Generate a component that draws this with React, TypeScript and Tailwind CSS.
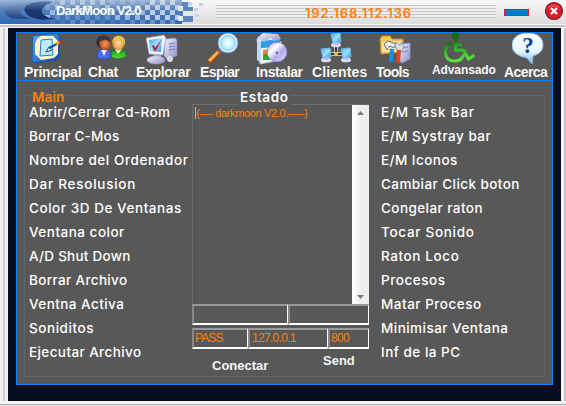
import type { ReactNode } from "react";

const leftItems = [
  ["Abrir/Cerrar Cd-Rom", "tracking-[0.36px]"], ["Borrar C-Mos", "tracking-[0.2px]"], ["Nombre del Ordenador", "tracking-[0.6px]"],
  ["Dar Resolusion", "tracking-[0.75px]"], ["Color 3D De Ventanas", "tracking-[0.55px]"], ["Ventana color", "tracking-[0.5px]"],
  ["A/D Shut Down", "tracking-[0.25px]"], ["Borrar Archivo", "tracking-[0.35px]"], ["Ventna Activa", "tracking-[0.45px]"],
  ["Soniditos", "tracking-[0.55px]"], ["Ejecutar Archivo", "tracking-[0.4px]"],
];
const rightItems = [
  ["E/M Task Bar", "tracking-[0.75px]"], ["E/M Systray bar", "tracking-[0.5px]"], ["E/M Iconos", "tracking-[0.45px]"],
  ["Cambiar Click boton", "tracking-[0.43px]"], ["Congelar raton", "tracking-[0.43px]"], ["Tocar Sonido", "tracking-[0.7px]"],
  ["Raton Loco", "tracking-[0.6px]"], ["Procesos", "tracking-[0.55px]"], ["Matar Proceso", "tracking-[0.5px]"],
  ["Minimisar Ventana", "tracking-[0.47px]"], ["Inf de la PC", "tracking-[0.5px]"],
];

function Icon({ children, className = "" }: { children: ReactNode; className?: string }) {
  return <svg width="32" height="32" viewBox="0 0 32 32" className={`block shrink-0 ${className}`}>{children}</svg>;
}

function Gradients() {
  return (
    <svg width="0" height="0" className="absolute">
      <defs>
        <linearGradient id="blue" x2="1" y2="1"><stop stopColor="#58b4f8" /><stop offset="1" stopColor="#0c3fae" /></linearGradient>
        <linearGradient id="screen" x2="1" y2="1"><stop stopColor="#38a5f4" /><stop offset=".5" stopColor="#9be2fc" /><stop offset="1" stopColor="#2790e8" /></linearGradient>
        <linearGradient id="case" x2="1" y2="1"><stop stopColor="#f5f5ff" /><stop offset="1" stopColor="#8d8fc6" /></linearGradient>
        <linearGradient id="green" y2="1" x2="0"><stop stopColor="#176b10" /><stop offset=".4" stopColor="#23b51c" /><stop offset="1" stopColor="#65df43" /></linearGradient>
        <radialGradient id="lens"><stop stopColor="#fff" /><stop offset=".6" stopColor="#c0f1fd" /><stop offset="1" stopColor="#69bceb" /></radialGradient>
        <radialGradient id="skin1"><stop stopColor="#f59a58" /><stop offset="1" stopColor="#b8481c" /></radialGradient>
        <radialGradient id="skin2"><stop stopColor="#ffe1a0" /><stop offset="1" stopColor="#e0983c" /></radialGradient>
        <linearGradient id="disc" x2="1" y2="1"><stop stopColor="#a8a3e5" /><stop offset=".35" stopColor="#fff" /><stop offset=".6" stopColor="#aca6e8" /><stop offset="1" stopColor="#f1e9ff" /></linearGradient>
        <linearGradient id="bubble" x2="0" y2="1"><stop stopColor="#fff" /><stop offset=".6" stopColor="#e9f5ff" /><stop offset="1" stopColor="#70b6ef" /></linearGradient>
      </defs>
    </svg>
  );
}

function PrincipalIcon() {
  return <Icon className="ml-2">
    <path d="M1 3 25 0l3 3-1 22-3 2-22 3-2-2Z" fill="url(#blue)" stroke="#0c479f" strokeWidth=".6" />
    <path d="m5 6 4-3h12l5 5v13l-4 4-13 2-6-6V11Z" fill="#fff6c7" />
    <path d="m9 7 11-1 1 16-13 1Z" fill="#bceaff" stroke="#1684d2" />
    <path d="m14 19 3-5 3 3Z" fill="#fff" stroke="#174581" />
    <path d="m17 15 8-4" stroke="#1755a1" strokeWidth="2.4" /><path d="m24 11 4-2" stroke="#ee9a26" strokeWidth="2.6" /><circle cx="29" cy="9" r="1.8" fill="#b82d17" />
  </Icon>;
}
function ChatIcon() {
  return <Icon className="ml-2">
    <path d="M15 24c0-6 2-8 7-8 6 0 8 3 8 7-3 3-11 3-15 1Z" fill="url(#green)" stroke="#258526" /><path d="m19 16 3 5 4-5" fill="#f7ffe8" />
    <ellipse cx="22.5" cy="10" rx="6" ry="7" fill="url(#skin2)" stroke="#b87827" strokeWidth=".6" />
    <path d="M16 10c1-9 10-9 13-3v5l-3-6c-4 2-7 0-10 4Z" fill="#ecc24a" />
    <path d="M1 24c0-5 2-8 7-8s7 3 7 8c-3 3-10 3-14 0Z" fill="#496de9" stroke="#3548a9" /><path d="m5 17 3 6 3-6" fill="#dceaff" />
    <circle cx="7" cy="9" r="6.6" fill="#302b36" /><ellipse cx="9" cy="11" rx="5.6" ry="6.2" fill="url(#skin1)" /><path d="M2 8c4 1 7-4 12 1V5L8 2 3 4Z" fill="#3c3540" />
  </Icon>;
}
function ExplorarIcon() {
  return <Icon className="ml-2.5">
    <path d="m19 6 10-1 2 2v16l-10 3-3-3Z" fill="url(#case)" stroke="#8183bf" strokeWidth=".6" /><path d="m23 11 6-1m-6 4 6-1m-6 4 6-1" stroke="#777ab8" />
    <path d="m8 21 7 1v5H7Z" fill="#aaaad8" /><ellipse cx="10" cy="27" rx="9" ry="4" fill="url(#case)" stroke="#a1a1c5" strokeWidth=".6" />
    <path d="m0 5 18-3 2 3-3 17-14-1Z" fill="#f4f4ff" stroke="#9597c8" strokeWidth=".7" /><path d="m3 7 13-2-1 14-11-1Z" fill="url(#screen)" />
    <path d="m6 13 3 6 7-13-7 9-1-3Z" fill="#c01824" /><circle cx="24" cy="26" r="3" fill="#dbdbee" />
  </Icon>;
}
function EspiarIcon() {
  return <Icon className="ml-2"><path d="m2 28 10-10" stroke="#a94b23" strokeWidth="5" strokeLinecap="round" /><path d="m1 28 9-9" stroke="#ffb64c" strokeWidth="3" /><path d="m11 19 3-3" stroke="#6470a4" strokeWidth="4" /><circle cx="20" cy="10" r="9" fill="url(#lens)" stroke="#dcecff" strokeWidth="2.2" /><circle cx="20" cy="10" r="10" fill="none" stroke="#5c82bb" strokeWidth=".7" /></Icon>;
}
function InstalarIcon() {
  return <Icon><path d="m1 6 16-2 8 5v18L4 31Z" fill="#eefaff" stroke="#b4c4e0" /><path d="m1 6 4 3v21l-4-3Z" fill="#bed9f2" /><path d="m5 8 19-2v8L5 15Z" fill="#2d9de4" /><path d="m1 5 6-5 15 1 3 5-7 2-3-3-7 4Z" fill="url(#case)" /><path d="M7 17h7v10H7Z" fill="#27a82a" /><path d="m7 17 7-1-2 4-5 2Z" fill="#f28425" /><circle cx="21" cy="19" r="9.8" fill="url(#disc)" stroke="#9189d1" /><circle cx="21" cy="20" r="2.2" fill="#706bbd" stroke="#f3f2ff" /></Icon>;
}
function SmallPc({ x, y }: { x: number; y: number }) {
  return <g transform={`translate(${x} ${y})`}><ellipse cx="6" cy="12" rx="5" ry="2.3" fill="#dedfff" /><path d="m1 1 9-1 1 9-8 1Z" fill="url(#screen)" stroke="#77b7ea" /><path d="M5 9h3v3H5Z" fill="#b6b8e0" /></g>;
}
function ClientesIcon() {
  return <Icon className="ml-2"><path d="M16 12v8M9 21h14" stroke="#dce3e8" strokeWidth="3.4" /><path d="M16 12v8M9 21h14" stroke="#202b32" strokeWidth="1.8" /><circle cx="16" cy="21" r="2.3" fill="#ffb42c" /><SmallPc x={10} y={0} /><SmallPc x={0} y={15} /><SmallPc x={20} y={15} /></Icon>;
}
function ToolsIcon() {
  return <Icon className="ml-[3px]"><path d="M1 6 3 3h8l2 3h11l1 13-23 2Z" fill="#f4c658" stroke="#c68b28" /><path d="m3 9 19-1v11H3Z" fill="#ffe398" /><path d="m21 11 10-1v16l-8 4-3-2Z" fill="url(#case)" stroke="#9191c8" /><path d="m23 15 6-1m-6 5 6-1" stroke="#7d7fbd" /><path d="m5 11 4-3 8 3-2 4-4-2-3 4Z" fill="#e8edf2" stroke="#68717c" /><path d="m13 16-1 13" stroke="#168ddd" strokeWidth="4" /><path d="m17 9 4 3 2-3 2 5-3 5h-3l-3-6Z" fill="#d6dce3" stroke="#747f8c" strokeWidth=".7" /><path d="m20 17-1 13" stroke="#e44022" strokeWidth="4" /></Icon>;
}
function AdvansadoIcon() {
  return <Icon className="ml-[11px] overflow-visible"><circle cx="12.5" cy="3" r="3.8" fill="#176b10" /><path d="M12.5 7v10h8l5 9 6-4" fill="none" stroke="url(#green)" strokeWidth="3.2" strokeLinejoin="round" /><path d="M13 12h6" stroke="#20a41c" strokeWidth="2.5" /><path d="M9 10c-10 4-8 18 2 18 6 0 9-3 10-7" fill="none" stroke="url(#green)" strokeWidth="3.2" /></Icon>;
}
function AcercaIcon() {
  return <Icon className="ml-2"><path d="M16 0C6 0 0 5 0 12c0 6 4 10 11 12l4 1 5 6 1-8c7-2 10-6 10-11C31 5 26 0 16 0Z" fill="url(#bubble)" stroke="#83b8e5" /><text x="16" y="20" textAnchor="middle" fontSize="23" fontWeight="700" fill="#0b3da2" className="font-['Liberation_Serif',serif]">?</text></Icon>;
}

const tools = [
  { label: "Principal", icon: <PrincipalIcon />, box: "w-[64px]", text: "text-[14px] tracking-[-0.2px]" },
  { label: "Chat", icon: <ChatIcon />, box: "w-[48px]", text: "text-[14px] tracking-[-0.3px]" },
  { label: "Explorar", icon: <ExplorarIcon />, box: "w-[64px]", text: "text-[14px] tracking-[-0.3px]" },
  { label: "Espiar", icon: <EspiarIcon />, box: "w-[56px]", text: "text-[14px] tracking-[-0.6px]" },
  { label: "Instalar", icon: <InstalarIcon />, box: "w-[56px]", text: "text-[14px] tracking-[-0.4px]" },
  { label: "Clientes", icon: <ClientesIcon />, box: "w-[64px]", text: "text-[14px] tracking-[0.1px]" },
  { label: "Tools", icon: <ToolsIcon />, box: "w-[56px]", text: "text-[14px] tracking-[-0.7px]" },
  { label: "Advansado", icon: <AdvansadoIcon />, box: "w-[72px]", text: "text-[12px] -mt-[2px] tracking-[-0.1px]" },
  { label: "Acerca", icon: <AcercaIcon />, box: "w-[46px]", text: "text-[14px] tracking-[-0.6px]" },
];

function TitleArt() {
  const cells = Array.from({ length: 210 }, (_, i) => {
    const col = Math.floor(i / 5), row = i % 5;
    const hash = (col * 17 + row * 31 + col * row * 7) % 11;
    return { x: col * 5, y: row * 5, on: (col + row) % 2 === 0, pale: hash > 5 };
  });
  return <svg width="206" height="24" viewBox="0 0 206 24" className="block shrink-0">
    <defs>
      <linearGradient id="title" x2="0" y2="1"><stop stopColor="#9db5d4" /><stop offset=".4" stopColor="#5480bb" /><stop offset="1" stopColor="#2f68b4" /></linearGradient>
      <linearGradient id="moon" x2="0" y2="1"><stop stopColor="#86a3ca" /><stop offset="1" stopColor="#1c3f80" /></linearGradient>
      <linearGradient id="moonDark" x2="0" y2="1"><stop stopColor="#5878a8" /><stop offset=".5" stopColor="#1c3970" /><stop offset="1" stopColor="#14306a" /></linearGradient>
    </defs>
    <path d="M0 0h182v24H0Z" fill="url(#title)" />
    {cells.map((c, i) => c.on && c.x > 44 && c.x < 180 ? <rect key={i} x={c.x} y={c.y} width="5" height="5" fill={c.y > 18 ? "#7ba0d0" : "#d6e1ee"} opacity={c.x > 140 ? .8 : c.pale ? .6 : .25} /> : null)}
    <path d="M182 2h6v5h5v4h-5v5h5v6h-11Z" fill="#5c87bf" />
    <path d="M178 6h5v5h-5ZM183 11h5v5h-5ZM178 16h5v5h-5Z" fill="#e4ebf4" />
    <path d="M188 2h4v4h-4ZM194 8h4v3h-4ZM199 3h4v3h-4ZM195 14h4v3h-4Z" fill="#c4d3e7" />
    <path d="M46 2C20 1 2 6 5 13c3 6 14 7 25 5-14-2-15-12 16-16Z" fill="url(#moon)" />
    <path d="M53 2C32 0 20 6 26 13c4 6 17 8 29 6-14-2-20-11-2-17Z" fill="url(#moonDark)" />
  </svg>;
}

const sunken = "border-t-2 border-l-2 border-t-[#999] border-l-[#888] border-b-2 border-r border-b-white border-r-white text-[#ff8000]";
const listItem = "h-6 whitespace-nowrap text-[13.5px] font-medium leading-6 text-white";

export default function App() {
  return (
    <div className="flex h-[406px] w-[566px] flex-col overflow-hidden bg-[#e8e8ea] font-['Liberation_Sans',sans-serif]">
      <Gradients />
      <header className="relative flex h-6 shrink-0 bg-gradient-to-b from-[#f8f8f8] to-[#dddde0]">
        <TitleArt />
        <span className="absolute left-14 top-[3px] whitespace-nowrap text-[13px] font-bold leading-[15px] tracking-[-0.7px] text-white">DarkMoon V2.0</span>
        <div className="mt-[5px] ml-2.5 h-[13px] w-[280px] bg-[repeating-linear-gradient(to_bottom,#c6c6c9_0px,#c6c6c9_1px,#eeeeef_1px,#eeeeef_3px)]" />
        <span className="absolute left-[305px] top-[5px] font-['Inter',sans-serif] text-[13px] font-semibold leading-4 tracking-[0.87px] text-[#ff8000]">192.168.112.136</span>
        <div className="mt-[9px] ml-2 h-[7px] w-[25px] border border-[#ef1418] bg-[#087cc1]" />
        <svg width="20" height="20" viewBox="0 0 20 20" className="mt-px ml-[15px]"><circle cx="10" cy="10" r="8.5" fill="#d81e28" stroke="#77191e" strokeWidth="1.2" /><path d="M3 8c1-5 11-7 14 0-4-3-10-3-14 0Z" fill="#e8454c" /><path d="m7 7 6 6m0-6-6 6" stroke="#fff" strokeWidth="2.2" /></svg>
      </header>
      <div className="h-1 shrink-0 border-t border-b border-t-[#f8f8f8] border-b-[#f4f4f4] bg-[#c5c5c8]" />
      <div className="flex h-[373px] shrink-0">
        <div className="w-[3px] bg-[#f0f0f1]" /><div className="w-0.5 bg-[#cfcfd2]" /><div className="w-[3px] bg-[#f1f1f1]" />
        <div className="flex w-[553px] bg-[#080e20] pt-1 pl-2">
          <main className="flex h-[353px] w-[537px] flex-col border border-[#0080ff] bg-[#585858]">
            <nav className="flex h-12 shrink-0 border-b border-[#0080ff] pl-[7px]">
              {tools.map((t) => <div key={t.label} className={`flex shrink-0 flex-col ${t.box}`}>{t.icon}<span className={`whitespace-nowrap font-bold leading-[14px] text-[#f7f7f7] ${t.text}`}>{t.label}</span></div>)}
            </nav>
            <section className="relative mx-[7px] mt-3.5 flex h-[282px] w-[521px] shrink-0 border border-[#646464] font-['Inter',sans-serif]">
              <span className="absolute -top-[8px] left-[5px] bg-[#585858] px-0.5 text-[13.5px] font-semibold leading-[18px] tracking-[0.1px] text-[#ff8000]">Main</span>
              <span className="absolute -top-[8px] left-[213px] bg-[#585858] px-0.5 text-[13.5px] font-semibold leading-[18px] tracking-[0.65px] text-white">Estado</span>
              <ul className="w-[167px] shrink-0 pt-1 pl-1">
                {leftItems.map(([s, tr]) => <li key={s} className={`${listItem} ${tr}`}>{s}</li>)}
              </ul>
              <div className="w-[177px] shrink-0 pt-2 font-['Liberation_Sans',sans-serif]">
                <div className="flex h-[200px] border-t border-l border-[#6d6d6d]">
                  <div className="flex-1 whitespace-nowrap pt-[2px] pl-0.5 text-[11px] leading-[13px] tracking-[-0.36px] text-[#ff8000]"><span className="border-l border-[#b8b8b8]">{"{---- darkmoon V2.0.-----}"}</span></div>
                  <div className="flex w-[17px] flex-col items-center justify-between bg-gradient-to-r from-white via-[#eeeeef] to-[#eee] py-[5px]">
                    <svg width="7" height="4" viewBox="0 0 7 4" className="mt-px"><path d="m0 4 3.5-4L7 4Z" fill="#777" /></svg><svg width="7" height="4" viewBox="0 0 7 4"><path d="m0 0 3.5 4L7 0Z" fill="#777" /></svg>
                  </div>
                </div>
                <div className="flex h-[21px]"><div className={`w-24 ${sunken}`} /><div className={`flex-1 ${sunken}`} /></div>
                <div className="mt-[3px] flex h-[21px] text-[12px] leading-[17px]"><div className={`w-14 pl-px tracking-[-0.9px] ${sunken}`}>PASS</div><div className={`w-20 pl-0.5 tracking-[-0.7px] ${sunken}`}>127.0.0.1</div><div className={`flex-1 pl-px tracking-[-0.7px] ${sunken}`}>800</div></div>
                <div className="flex pl-5 text-[13px] font-bold leading-4 text-[#f4f4f4]"><span className="mt-[9px] w-[111px]">Conectar</span><span className="mt-1">Send</span></div>
              </div>
              <ul className="pt-1 pl-[12px]">
                {rightItems.map(([s, tr]) => <li key={s} className={`${listItem} ${tr}`}>{s}</li>)}
              </ul>
            </section>
          </main>
        </div>
        <div className="w-[3px] bg-[#f4f4f4]" /><div className="w-0.5 bg-[#c4c4c8]" />
      </div>
      <div className="h-[3px] shrink-0 bg-[#f2f2f2]" /><div className="h-px shrink-0 bg-[#aaaab4]" />
    </div>
  );
}
